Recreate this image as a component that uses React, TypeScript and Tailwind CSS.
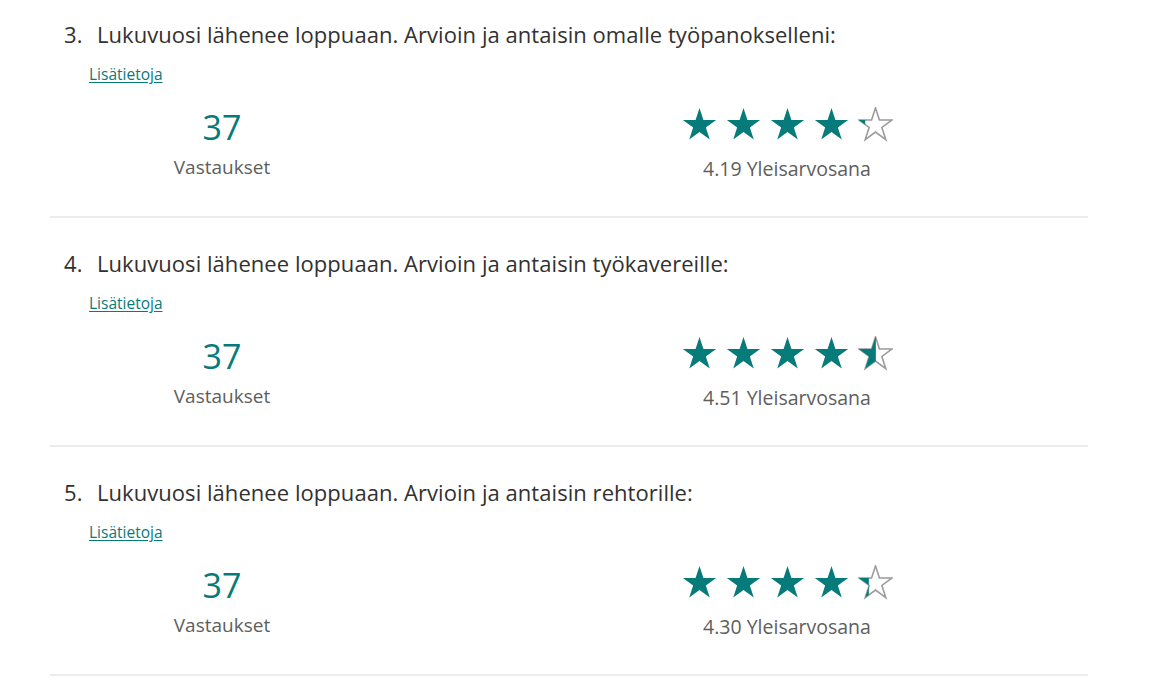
import React from 'react';

type Question = {
  no: number;
  title: string;
  responses: number;
  score: number;
};

const QUESTIONS: Question[] = [
  { no: 3, title: 'Lukuvuosi lähenee loppuaan. Arvioin ja antaisin omalle työpanokselleni:', responses: 37, score: 4.19 },
  { no: 4, title: 'Lukuvuosi lähenee loppuaan. Arvioin ja antaisin työkavereille:', responses: 37, score: 4.51 },
  { no: 5, title: 'Lukuvuosi lähenee loppuaan. Arvioin ja antaisin rehtorille:', responses: 37, score: 4.3 },
];

const STAR_POINTS = '12,0.6 14.69,8.89 23.41,8.89 16.36,14.02 19.05,22.31 12,17.18 4.95,22.31 7.64,14.02 0.59,8.89 9.31,8.89';

const Star: React.FC<{ fill: number; id: string }> = ({ fill, id }) => {
  // fill: 0..1 share of the star painted teal
  const clipW = 0.59 + 22.82 * fill;
  return (
    <svg viewBox="0 0 24 24" className="w-[35px] h-[35px]">
      {fill < 1 && (
        <polygon points={STAR_POINTS} fill="none" stroke="#9b9b9b" strokeWidth="1.1" strokeLinejoin="miter" />
      )}
      <defs>
        <clipPath id={id}>
          <rect x="0" y="0" width={clipW} height="24" />
        </clipPath>
      </defs>
      {fill > 0 && <polygon points={STAR_POINTS} fill="#077a7a" clipPath={`url(#${id})`} />}
    </svg>
  );
};

const Stars: React.FC<{ score: number; qid: number }> = ({ score, qid }) => (
  <div className="flex gap-[9px]">
    {[0, 1, 2, 3, 4].map((i) => {
      const f = Math.max(0, Math.min(1, score - i));
      return <Star key={i} fill={f} id={`clip-${qid}-${i}`} />;
    })}
  </div>
);

const QuestionBlock: React.FC<{ q: Question; first: boolean }> = ({ q, first }) => (
  <div className={first ? 'pt-[19px]' : 'pt-[30px] border-t-2 border-[#ececec]'}>
    <div className="flex items-baseline pl-[14px] text-[22px] tracking-[0.05px] leading-[30px] text-[#323130]">
      <span className="w-[33px] shrink-0">{q.no}.</span>
      <span>{q.title}</span>
    </div>
    <div className="pl-[39px] mt-[15px] leading-[20px]">
      <a href="#" className="text-[15.5px] text-[#077a7a] underline underline-offset-2">
        Lisätietoja
      </a>
    </div>
    <div className="flex pl-[39px] mt-[23px] pb-[34px]">
      <div className="w-[266px] flex flex-col items-center">
        <div className="text-[34px] leading-[40px] text-[#077a7a]">{q.responses}</div>
        <div className="mt-[7px] text-[19px] leading-[26px] text-[#605e5c]">Vastaukset</div>
      </div>
      <div className="ml-[282px] w-[300px] flex flex-col items-center">
        <Stars score={q.score} qid={q.no} />
        <div className="mt-[14px] text-[19.5px] leading-[26px] text-[#605e5c]">
          {q.score.toFixed(2)} Yleisarvosana
        </div>
      </div>
    </div>
  </div>
);

const App: React.FC = () => {
  return (
    <div
      className="min-h-screen w-full bg-white overflow-hidden"
      style={{ fontFamily: '"Open Sans", "Noto Sans", sans-serif' }}
    >
      <div className="ml-[50px] w-[1038px] border-b-2 border-[#ececec]">
        {QUESTIONS.map((q, i) => (
          <QuestionBlock key={q.no} q={q} first={i === 0} />
        ))}
      </div>
    </div>
  );
};

export default App;
